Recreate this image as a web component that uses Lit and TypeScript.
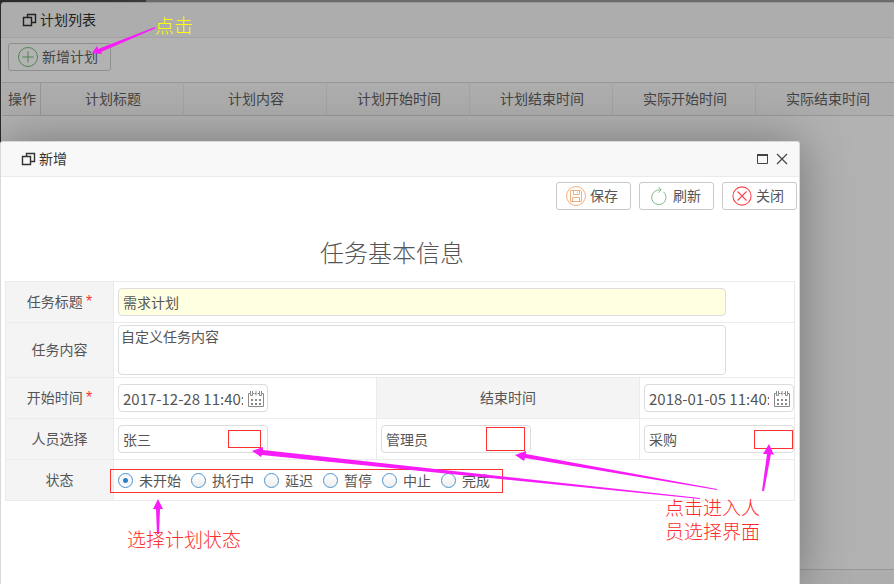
import { LitElement, html, css, svg } from "lit";
import { customElement, state } from "lit/decorators.js";

const windowsIcon = html`<svg class="win-icon" width="15" height="14" viewBox="0 0 15 14" aria-hidden="true">
  <path d="M5.5 4.5V1.5H13.5V9.5H9.5M1.5 4.5H9.5V12.5H1.5Z" fill="none" stroke="currentColor" stroke-width="1.4" />
</svg>`;

const plusIcon = html`<svg width="22" height="22" viewBox="0 0 22 22" aria-hidden="true">
  <g fill="none" stroke="#4f8452" stroke-width="1"><circle cx="11" cy="11" r="9.5" /><path d="M11 5.5v11M5.5 11h11" /></g>
</svg>`;

const saveIcon = html`<svg width="22" height="22" viewBox="0 0 22 22" aria-hidden="true">
  <g fill="none" stroke="#f0b080" stroke-width="1">
    <circle cx="11" cy="11" r="9.5" />
    <path d="M5.5 5.500h10l1 1v10h-11zM8.500 5.500v4h6v-4M12.500 6.500v1.500M7.500 16.500v-4h7v4" />
  </g>
</svg>`;

const refreshIcon = html`<svg width="22" height="22" viewBox="0 0 22 22" aria-hidden="true">
  <path d="M15.500 6.900A7.200 7.200 0 1 1 7 6.300C8.500 5.200 10.500 4.700 13 4.800M10.500 2L13.200 4.800L10.500 7.700" fill="none" stroke="#7dbb8c" stroke-width="1" />
</svg>`;

const closeIcon = html`<svg width="22" height="22" viewBox="0 0 22 22" aria-hidden="true">
  <g fill="none" stroke="#f8474f" stroke-width="1.100"><circle cx="11" cy="11" r="9.100" /><path d="M6.500 6.500l9 9M15.500 6.500l-9 9" /></g>
</svg>`;

const calendarIcon = html`<svg width="16" height="16" viewBox="0 0 16 16" aria-hidden="true">
  <path d="M2.500 2.500H.5v13h15v-13h-2M4.500 0v4.500M2.500 0v4.500h2M8 0v4.500M11.500 0v4.500h2V0M4.500 2.500h1.500M6.500 2.500h1.500M9.500 2.500h2" fill="none" stroke="#8a8a8a" />
  <path d="M3 8h2v2H3zM7 8h2v2H7zM11 8h2v2h-2zM3 12h2v2H3zM7 12h2v2H7zM11 12h2v2h-2z" fill="#8a8a8a" />
</svg>`;

const arrows = [
  "92,53 97,46 98,49 155,27 156,28 101,52 102,54",
  "252,451 263,447 263,450 700,498 700,499 262,455 261,457",
  "515,455 526,451 526,454 717,489 717,490 525,458 524,461",
  "769,444 774,455 771,454 764,491 762,491 767,454 763,454",
  "158,499 163,509 160,509 159,534 157,534 156,509 153,509",
];

const marks = [
  { x: 228, y: 430, w: 33, h: 18 },
  { x: 486, y: 427, w: 39, h: 24 },
  { x: 754, y: 430, w: 39, h: 19 },
  { x: 110, y: 469, w: 393, h: 24 },
];

const columns = ["操作", "计划标题", "计划内容", "计划开始时间", "计划结束时间", "实际开始时间", "实际结束时间"];
const statuses = ["未开始", "执行中", "延迟", "暂停", "中止", "完成"];

@customElement("app-root")
export class AppRoot extends LitElement {
  @state() private status = "未开始";

  static styles = css`
    :host {
      display: block;
      position: relative;
      min-height: 100vh;
      overflow: hidden;
      background: linear-gradient(90deg, #2a2a2a 0, #3a3a3a 146px, #6c6c6c 146px);
      font: 14px/20px "Noto Sans CJK SC", sans-serif;
      color: #555;
    }
    *, *::before { box-sizing: border-box; }
    svg { display: block; flex: none; }
    button, input, textarea { font: inherit; color: inherit; }
    h1, h2 { margin: 0; font-weight: 400; }

    .list {
      display: flex;
      flex-direction: column;
      min-height: 100vh;
      padding: 2px 0 0 1px;
      color: #444;
    }
    .list-head {
      display: flex;
      align-items: center;
      gap: 3px;
      height: 36px;
      padding-left: 21px;
      border-top: 1px solid #979797;
      border-bottom: 1px solid #a3a3a3;
      border-radius: 3px 0 0 0;
      background: #adadad;
      color: #222;
    }
    .caption { padding-bottom: 2px; font-size: 14px; line-height: 20px; }
    .list-tools { padding: 5px 7px 11px; background: #b2b2b2; }
    .btn {
      display: flex;
      align-items: center;
      justify-content: center;
      gap: 3px;
      height: 28px;
      width: 75px;
      padding: 0 4px 0 0;
      border: 1px solid #c8c8c8;
      border-radius: 3px;
      background: #fff;
    }
    .btn span { padding-bottom: 2px; }
    .btn-add { width: 103px; background: transparent; border-color: #8f8f8f; }
    .grid-wrap { flex: 1; overflow: hidden; padding-left: 1px; background: #b2b2b2; }
    .grid { width: 897px; table-layout: fixed; border-collapse: separate; border-spacing: 0; }
    .grid th {
      width: 143px;
      height: 34px;
      padding: 0 0 2px 2px;
      font-weight: 400;
      text-align: center;
      white-space: nowrap;
      background: #adadad;
      border: solid #979797;
      border-width: 1px 0;
      border-right: 1px solid #a3a3a3;
    }
    .grid th:first-child { width: 39px; border-right-color: #979797; }
    .list-foot { height: 15px; border-top: 1px solid #979797; background: #adadad; }

    .dialog {
      position: absolute;
      top: 141px;
      left: 0;
      right: 94px;
      bottom: 0;
      border: 1px solid #d8d8d8;
      border-bottom: 0;
      border-radius: 3px 3px 0 0;
      background: #fff;
      box-shadow: 1px 1px 50px rgba(0, 0, 0, 0.35);
    }
    .dialog-head {
      display: flex;
      align-items: center;
      gap: 3px;
      height: 35px;
      padding: 0 9px 0 20px;
      border-bottom: 1px solid #ebebeb;
      border-radius: 3px 3px 0 0;
      background: #f8f8f8;
      color: #333;
    }
    .dialog-head .caption { flex: 1; }
    .icon-btn { padding: 2px; border: 0; background: none; color: #444; }
    .tools { display: flex; justify-content: flex-end; gap: 8px; padding: 5px 2px 0; }
    .title {
      padding: 23px 16px 10px 0;
      font-size: 24px;
      line-height: 38px;
      font-weight: 300;
      text-align: center;
    }
    .form-wrap { padding: 0 4px; }
    .form { width: 100%; table-layout: fixed; border-collapse: collapse; }
    .form th, .form td { height: 41px; padding: 0; border: 1px solid #ebebeb; }
    .form th { padding-bottom: 2px; font-weight: 400; text-align: center; background: #f4f4f4; }
    .form td { padding-left: 4px; }
    .c-label { width: 108px; }
    .c-last { width: 155px; }
    .form .tall { height: 55px; }
    .req { color: #f33; font-family: "Liberation Sans", sans-serif; font-size: 16px; }
    .field {
      display: block;
      width: 150px;
      height: 28px;
      margin: 0;
      padding: 0 4px;
      border: 1px solid #dcdcdc;
      border-radius: 4px;
      background: #fff;
      outline: 0;
    }
    .wide { width: 608px; max-width: 98%; }
    .must { background: #ffffe1; }
    .area { height: 50px; padding: 0 2px; resize: none; }
    .date { position: relative; width: 150px; }
    .date .field { padding-right: 24px; font-size: 15px; }
    .cal { position: absolute; right: 4px; top: 7px; padding: 0; border: 0; background: none; }
    .radios { display: flex; gap: 10px; }
    .radio { display: flex; align-items: center; gap: 6px; }
    .radio input {
      appearance: none;
      width: 15px;
      height: 15px;
      margin: 0;
      border: 1px solid #4a94d0;
      border-radius: 50%;
      background: linear-gradient(#fff, #eee);
    }
    .radio input:checked { background: radial-gradient(circle, #2f7fc4 0 2px, #f8f8f8 3px); }

    .notes { position: absolute; inset: 0; pointer-events: none; }
    .ink { position: absolute; left: 0; top: 0; overflow: visible; }
    .note { position: absolute; margin: 0; font-size: 19px; line-height: 24px; font-weight: 300; color: #ff2a2a; }
    .n-add { left: 155px; top: 13px; color: #ff0; }
    .n-status { left: 127px; top: 527px; }
    .n-people { left: 665px; top: 495px; width: 95px; }
  `;

  private dateField(id: string, value: string, label: string) {
    return html`<div class="date">
      <input class="field" id=${id} aria-label=${label} .value=${value} />
      <button class="cal" aria-label="选择日期">${calendarIcon}</button>
    </div>`;
  }

  render() {
    return html`
      <main class="list">
        <header class="list-head">${windowsIcon}<h1 class="caption">计划列表</h1></header>
        <div class="list-tools"><button class="btn btn-add">${plusIcon}<span>新增计划</span></button></div>
        <div class="grid-wrap">
          <table class="grid"><thead><tr>${columns.map((c) => html`<th>${c}</th>`)}</tr></thead></table>
        </div>
        <footer class="list-foot"></footer>
      </main>

      <section class="dialog" role="dialog" aria-label="新增">
        <header class="dialog-head">
          ${windowsIcon}<h2 class="caption">新增</h2>
          <button class="icon-btn" aria-label="最大化">
            <svg width="13" height="12" viewBox="0 0 13 12"><path d="M1.500 2v8.500h10V2" fill="none" stroke="currentColor" /><path d="M1 1h11v2H1z" fill="currentColor" /></svg>
          </button>
          <button class="icon-btn" aria-label="关闭窗口">
            <svg width="12" height="12" viewBox="0 0 12 12"><path d="M1 1l10 10M11 1L1 11" fill="none" stroke="currentColor" stroke-width="1.200" /></svg>
          </button>
        </header>
        <div class="tools">
          <button class="btn">${saveIcon}<span>保存</span></button>
          <button class="btn">${refreshIcon}<span>刷新</span></button>
          <button class="btn">${closeIcon}<span>关闭</span></button>
        </div>
        <h2 class="title">任务基本信息</h2>
        <div class="form-wrap">
          <table class="form">
            <colgroup><col class="c-label" /><col /><col /><col class="c-last" /></colgroup>
            <tr>
              <th><label for="title">任务标题 <span class="req">*</span></label></th>
              <td colspan="3"><input class="field wide must" id="title" .value=${"需求计划"} /></td>
            </tr>
            <tr>
              <th class="tall"><label for="content">任务内容</label></th>
              <td colspan="3"><textarea class="field wide area" id="content" .value=${"自定义任务内容"}></textarea></td>
            </tr>
            <tr>
              <th><label for="start">开始时间 <span class="req">*</span></label></th>
              <td>${this.dateField("start", "2017-12-28 11:40:00", "开始时间")}</td>
              <th><label for="end">结束时间</label></th>
              <td>${this.dateField("end", "2018-01-05 11:40:00", "结束时间")}</td>
            </tr>
            <tr>
              <th><label for="person">人员选择</label></th>
              <td><input class="field" id="person" .value=${"张三"} /></td>
              <td><input class="field" aria-label="角色" .value=${"管理员"} /></td>
              <td><input class="field" aria-label="部门" .value=${"采购"} /></td>
            </tr>
            <tr>
              <th>状态</th>
              <td colspan="3">
                <div class="radios" role="radiogroup" aria-label="状态">
                  ${statuses.map(
                    (s) => html`<label class="radio"
                      ><input type="radio" name="status" .checked=${s === this.status} @change=${() => (this.status = s)} />${s}</label
                    >`
                  )}
                </div>
              </td>
            </tr>
          </table>
        </div>
      </section>

      <div class="notes">
        <svg class="ink" width="894" height="584" viewBox="0 0 894 584" aria-hidden="true">
          ${marks.map((m) => svg`<rect x=${m.x + 0.5} y=${m.y + 0.5} width=${m.w - 1} height=${m.h - 1} fill="none" stroke="#ff3030" />`)}
          ${arrows.map((p) => svg`<polygon points=${p} fill="#f81cf8" />`)}
        </svg>
        <p class="note n-add">点击</p>
        <p class="note n-status">选择计划状态</p>
        <p class="note n-people">点击进入人员选择界面</p>
      </div>
    `;
  }
}
